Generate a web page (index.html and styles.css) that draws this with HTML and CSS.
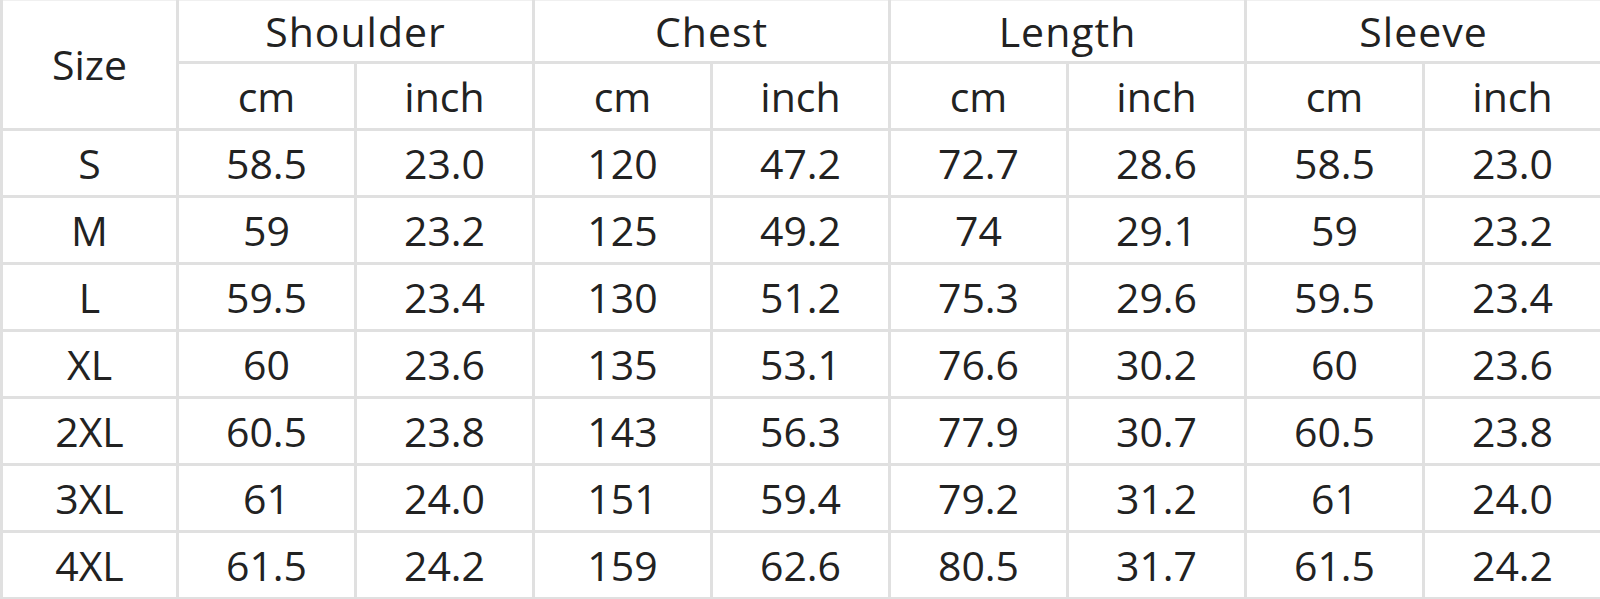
FILE: index.html
```html
<!DOCTYPE html>
<html lang="en">
<head>
<meta charset="utf-8">
<title>Size Chart</title>
<link rel="stylesheet" href="styles.css">
</head>
<body>
<table class="chart">
  <colgroup>
    <col class="c-size">
    <col class="c-val"><col class="c-val"><col class="c-val"><col class="c-val">
    <col class="c-val"><col class="c-val"><col class="c-val"><col class="c-val">
  </colgroup>
  <thead>
    <tr class="r-head1">
      <th rowspan="2">Size</th>
      <th colspan="2" class="group">Shoulder</th>
      <th colspan="2" class="group">Chest</th>
      <th colspan="2" class="group">Length</th>
      <th colspan="2" class="group">Sleeve</th>
    </tr>
    <tr class="r-row">
      <th>cm</th><th>inch</th><th>cm</th><th>inch</th><th>cm</th><th>inch</th><th>cm</th><th>inch</th>
    </tr>
  </thead>
  <tbody>
    <tr class="r-row"><td>S</td><td>58.5</td><td>23.0</td><td>120</td><td>47.2</td><td>72.7</td><td>28.6</td><td>58.5</td><td>23.0</td></tr>
    <tr class="r-row"><td>M</td><td>59</td><td>23.2</td><td>125</td><td>49.2</td><td>74</td><td>29.1</td><td>59</td><td>23.2</td></tr>
    <tr class="r-row"><td>L</td><td>59.5</td><td>23.4</td><td>130</td><td>51.2</td><td>75.3</td><td>29.6</td><td>59.5</td><td>23.4</td></tr>
    <tr class="r-row"><td>XL</td><td>60</td><td>23.6</td><td>135</td><td>53.1</td><td>76.6</td><td>30.2</td><td>60</td><td>23.6</td></tr>
    <tr class="r-row"><td>2XL</td><td>60.5</td><td>23.8</td><td>143</td><td>56.3</td><td>77.9</td><td>30.7</td><td>60.5</td><td>23.8</td></tr>
    <tr class="r-row"><td>3XL</td><td>61</td><td>24.0</td><td>151</td><td>59.4</td><td>79.2</td><td>31.2</td><td>61</td><td>24.0</td></tr>
    <tr class="r-row"><td>4XL</td><td>61.5</td><td>24.2</td><td>159</td><td>62.6</td><td>80.5</td><td>31.7</td><td>61.5</td><td>24.2</td></tr>
  </tbody>
</table>
</body>
</html>
```

FILE: styles.css
```css
html, body {
  margin: 0;
  padding: 0;
  background: #ffffff;
}

.chart {
  width: 1600px;
  table-layout: fixed;
  border-collapse: collapse;
  font-family: "Open Sans", "Noto Sans", "DejaVu Sans", sans-serif;
  font-size: 41px;
  font-weight: 400;
  color: #222222;
}

.c-size { width: 176px; }
.c-val { width: 178px; }

.chart th,
.chart td {
  border: 3px solid #e0e0e0;
  padding: 0;
  text-align: center;
  vertical-align: middle;
  font-weight: 400;
  line-height: 1;
}

.chart .group {
  letter-spacing: 1px;
}

.chart thead tr:first-child th {
  border-top: 1px solid #f0f0f0;
}

.r-head1 { height: 62px; }
.r-row { height: 67px; }
```
